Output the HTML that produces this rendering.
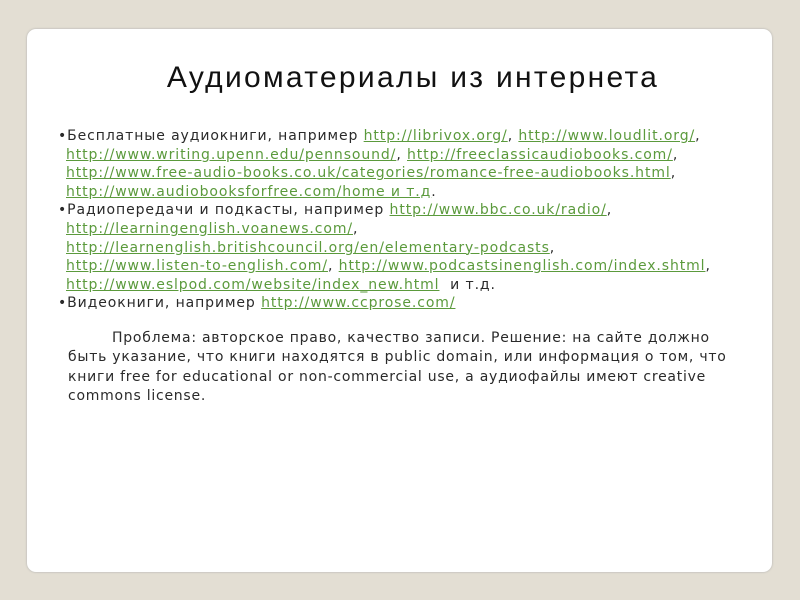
<!DOCTYPE html>
<html><head><meta charset="utf-8"><style>
body{margin:0;width:800px;height:600px;background:#e3ded3;position:relative;overflow:hidden;font-family:"DejaVu Sans","Liberation Sans",sans-serif;}
.card{position:absolute;left:27px;top:29px;width:745px;height:543px;background:#fff;border-radius:9px;box-shadow:0 0 2px #aaa;}
h1{position:absolute;left:0;width:826px;top:61px;margin:0;text-align:center;font:30px "Liberation Sans","DejaVu Sans",sans-serif;color:#111;letter-spacing:2.3px}
.t{position:absolute;left:58px;top:127px;font-size:14px;line-height:18.6px;color:#2a2a2a;white-space:nowrap;letter-spacing:.9px}
a{color:#5b9a3c;text-decoration:underline}
.i{padding-left:8px}
.p{position:absolute;left:68px;top:329px;font-size:14px;line-height:19.3px;color:#2a2a2a;white-space:nowrap;letter-spacing:.75px}
</style></head><body>
<div class="card"></div>
<h1>Аудиоматериалы из интернета</h1>
<div class="t">
•Бесплатные аудиокниги, например <a>http://librivox.org/</a>, <a> http://www.loudlit.org/</a>,<br>
<span class="i"><a>http://www.writing.upenn.edu/pennsound/</a>, <a>http://freeclassicaudiobooks.com/</a>,</span><br>
<span class="i"><a>http://www.free-audio-books.co.uk/categories/romance-free-audiobooks.html</a>,</span><br>
<span class="i"><a>http://www.audiobooksforfree.com/home и т.д</a>.</span><br>
•Радиопередачи и подкасты, например <a>http://www.bbc.co.uk/radio/</a>,<br>
<span class="i"><a>http://learningenglish.voanews.com/</a>,</span><br>
<span class="i"><a>http://learnenglish.britishcouncil.org/en/elementary-podcasts</a>,</span><br>
<span class="i"><a>http://www.listen-to-english.com/</a>, <a>http://www.podcastsinenglish.com/index.shtml</a>,</span><br>
<span class="i"><a>http://www.eslpod.com/website/index_new.html</a>&nbsp; и т.д.</span><br>
•Видеокниги, например <a>http://www.ccprose.com/</a>
</div>
<div class="p">
<span style="padding-left:44px">Проблема: авторское право, качество записи. Решение: на сайте должно</span><br>
быть указание, что книги находятся в public domain, или информация о том, что<br>
книги free for educational or non-commercial use, а аудиофайлы имеют creative<br>
commons license.
</div>
</body></html>
